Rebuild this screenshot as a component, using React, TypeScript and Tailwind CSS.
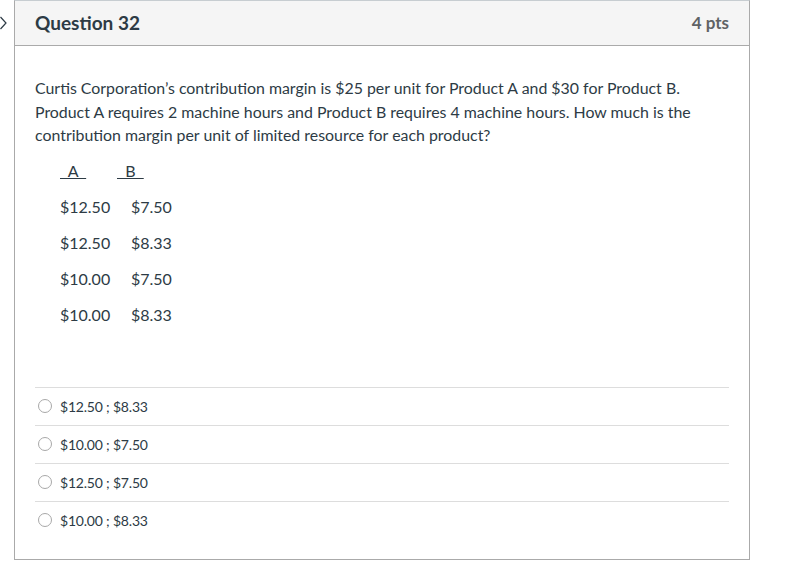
const TEXT = 'text-[#2d3b45]';

const ROWS = [
  ['$12.50', '$7.50'],
  ['$12.50', '$8.33'],
  ['$10.00', '$7.50'],
  ['$10.00', '$8.33'],
];

const ANSWERS = ['$12.50 ; $8.33', '$10.00 ; $7.50', '$12.50 ; $7.50', '$10.00 ; $8.33'];

export default function App() {
  return (
    <div className="relative h-[575px] w-[789px] bg-white" style={{ fontFamily: 'Lato, "Open Sans", sans-serif' }}>
      {/* collapsed nav chevron peeking at the edge */}
      <svg className="absolute left-0 top-[16px]" width="8" height="14" viewBox="0 0 8 14" fill="none">
        <path d="M0.5 1L6 7L0.5 13" stroke="#2d3b45" strokeWidth="1.2" />
      </svg>

      <div className="ml-[14px] w-[736px] border border-[#aaaaaa] border-t-[#c7cdd1]">
        <div className="flex h-[45px] items-center justify-between border-b border-[#aaaaaa] bg-[#f5f5f5] pl-[20px] pr-[20px]">
          <h2 className={`text-[19px] font-bold ${TEXT}`}>Question 32</h2>
          <span className="text-[17px] font-bold text-[#5f6265]">4 pts</span>
        </div>

        <div className={`px-[20px] pt-[30px] ${TEXT}`}>
          <p className="text-[15.9px] leading-[23.5px]">
            Curtis Corporation’s contribution margin is $25 per unit for Product A and $30 for Product B. Product A requires 2 machine hours and Product B requires 4 machine hours. How much is the contribution margin per unit of limited resource for each product?
          </p>

          <div className="mt-[13px] pl-[25px] text-[16px]">
            <div className="flex h-[20px] items-end">
              <span className="w-[57px] leading-[18px]"><span className="underline">&nbsp;&nbsp;A&nbsp;&nbsp;</span></span>
              <span className="leading-[18px]"><span className="underline">&nbsp;&nbsp;B&nbsp;&nbsp;</span></span>
            </div>
            <div className="mt-[9px] flex flex-col">
              {ROWS.map(([a, b], i) => (
                <div key={i} className="flex h-[36px] items-center">
                  <span className="w-[71px]">{a}</span>
                  <span>{b}</span>
                </div>
              ))}
            </div>
          </div>

          <div className="mt-[54px] pb-[20px]">
            {ANSWERS.map((ans) => (
              <div key={ans} className="flex h-[38px] items-center border-t border-[#dddddd]">
                <span className="ml-[3px] mr-[8px] h-[14px] w-[14px] rounded-full border border-[#a8a8a8] bg-white" />
                <span className="text-[14px] tracking-[-0.2px]">{ans}</span>
              </div>
            ))}
          </div>
        </div>
      </div>
    </div>
  );
}
